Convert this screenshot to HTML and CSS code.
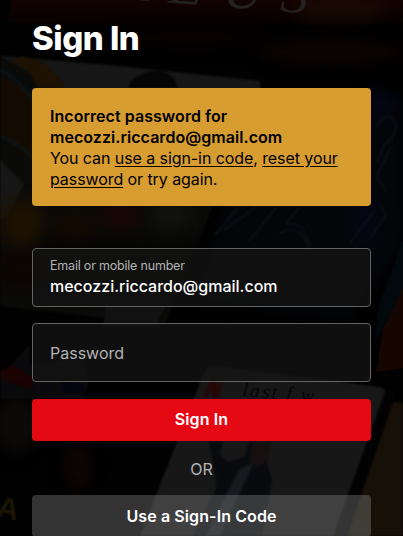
FILE: index.html
```html
<!DOCTYPE html>
<html lang="en">

<head>
    <meta charset="UTF-8">
    <meta name="viewport" content="width=device-width, initial-scale=1.0">
    <title>Sign In</title>
    <link rel="stylesheet" href="styles.css">
</head>

<body>
    <!-- poster wall -->
    <svg class="backdrop" viewBox="0 0 403 536" preserveAspectRatio="xMidYMin slice" aria-hidden="true">
        <defs>
            <linearGradient id="wood" x1="0" y1="0" x2="0" y2="1">
                <stop offset="0" stop-color="#130202"></stop>
                <stop offset="1" stop-color="#030101"></stop>
            </linearGradient>
            <filter id="soft" x="-30%" y="-30%" width="160%" height="160%" color-interpolation-filters="sRGB">
                <feGaussianBlur stdDeviation="7"></feGaussianBlur>
            </filter>
            <filter id="edge" color-interpolation-filters="sRGB">
                <feGaussianBlur stdDeviation="0.8"></feGaussianBlur>
            </filter>
        </defs>
        <rect width="403" height="536" fill="#010101"></rect>

        <!-- top poster -->
        <path d="M12 0H403V22L250 28L8 22Z" fill="url(#wood)"></path>
        <g filter="url(#soft)">
            <ellipse cx="340" cy="8" rx="46" ry="13" fill="#180a01"></ellipse>
            <ellipse cx="330" cy="52" rx="75" ry="13" fill="#0a0301"></ellipse>
            <ellipse cx="190" cy="38" rx="80" ry="10" fill="#080201"></ellipse>
        </g>
        <text class="poster-title" x="134 168 222 280" y="0" transform="rotate(4.5 136 0)">IEUS</text>

        <!-- left poster -->
        <g filter="url(#edge)">
            <path d="M0 55L258 80Q262 82 260 90L165 325L0 306Z" fill="#0a0a09"></path>
            <path d="M0 56L120 66L260 81V90H60Z" fill="#161616"></path>
            <path d="M129 88Q129 78 140 76Q147 70 160 71Q174 73 178 88Z" fill="#050505"></path>
            <path d="M0 76Q22 84 34 101V166Q16 145 0 138Z" fill="#130b02"></path>
            <path d="M22 56Q50 60 66 88H37Q32 68 10 62Z" fill="#1d1102"></path>
            <path d="M0 69Q19 80 34 100M0 136Q19 143 34 158" fill="none" stroke="#0a1417" stroke-width="3"></path>
            <path d="M0 160L24 184L8 216L0 220Z" fill="#171717"></path>
        </g>
        <g filter="url(#soft)">
            <ellipse cx="22" cy="223" rx="22" ry="24" fill="#1d1101"></ellipse>
            <ellipse cx="120" cy="216" rx="20" ry="14" fill="#180703"></ellipse>
            <ellipse cx="76" cy="226" rx="22" ry="15" fill="#130a01"></ellipse>
            <ellipse cx="170" cy="215" rx="20" ry="14" fill="#111110"></ellipse>
            <ellipse cx="22" cy="270" rx="25" ry="20" fill="#0c0501"></ellipse>
            <path d="M38 238L210 240L190 300L45 290Z" fill="#040403"></path>
        </g>
        <path d="M106 306H166L155 326H103Z" fill="#111111"></path>

        <!-- blue poster -->
        <g filter="url(#soft)">
            <path d="M225 200L403 90V245L350 320L195 300Z" fill="#040509"></path>
            <ellipse cx="366" cy="218" rx="14" ry="25" fill="#040614"></ellipse>
            <ellipse cx="378" cy="105" rx="12" ry="18" fill="#030514"></ellipse>
        </g>
        <g class="strands" filter="url(#edge)">
            <path d="M238 208L214 236M256 207L224 230M276 208L249 241M300 207L286 223L301 226L311 247"></path>
            <path d="M376 127Q388 108 395 122Q400 131 384 145L377 163M391 147L376 177L386 191"></path>
            <path d="M350 243L375 210M378 203L386 214L371 237M279 234Q299 220 311 252"></path>
        </g>
        <path d="M403 240L379 305L374 344L403 290Z" fill="#02090d"></path>
        <path d="M403 288L383 329L376 372L403 368Z" fill="#150601"></path>

        <!-- lower left poster -->
        <g filter="url(#edge)">
            <path d="M0 377L30 344V365L84 359L89 382L83 399H0Z" fill="#0a090b"></path>
            <path d="M0 371L14 365L33 378V389L12 384L0 378Z" fill="#1b0203"></path>
            <path d="M62 382L84 385V393H62Z" fill="#030410"></path>
        </g>
        <g filter="url(#soft)">
            <ellipse cx="17" cy="425" rx="22" ry="28" fill="#0c0a09"></ellipse>
            <ellipse cx="78" cy="466" rx="13" ry="27" fill="#0c0503"></ellipse>
        </g>
        <text class="poster-mark" x="-4" y="517" transform="rotate(12 0 514)">A</text>

        <!-- playing card -->
        <g filter="url(#edge)">
            <path d="M215 366Q208 364 203 375L140 536H336L386 396Q388 389 380 387Z" fill="#181718"></path>
            <path d="M209 441H223L220 454L228 462L244 457L250 441H270L267 463L272 480L262 536H193L217 487Z" fill="#080a0e"></path>
            <path d="M252 441H269L267 460L258 468L250 460Z" fill="#15100f"></path>
            <path d="M239 470L254 462L241 490L220 536H206L227 493Z" fill="#171a1e"></path>
            <path d="M203 397L211 377L216 379L219 387L224 376L219 398H213L210 391L207 398Z" fill="#250607"></path>
            <path d="M403 403L389 401L340 536H403Z" fill="#171006"></path>
            <path d="M386 389L397 391L347 536H333Z" fill="#020202"></path>
        </g>
        <text class="card-note" x="242" y="396" transform="rotate(5 242 396)">last f w</text>
    </svg>

    <main class="login">
        <h1 class="login-title">Sign In</h1>

        <div class="alert" role="alert">
            <strong>Incorrect password for <span>mecozzi.riccardo@gmail.com</span></strong>
            <p>You can <a href="#">use a sign-in code</a>, <a href="#">reset your password</a> or try again.</p>
        </div>

        <form class="login-form">
            <div class="field filled">
                <label for="email">Email or mobile number</label>
                <input type="text" id="email" value="mecozzi.riccardo@gmail.com">
            </div>
            <div class="field">
                <input type="password" id="password" placeholder="Password" aria-label="Password">
            </div>
            <button type="submit" class="btn btn-primary">Sign In</button>
            <p class="divider">OR</p>
            <button type="button" class="btn btn-secondary">Use a Sign-In Code</button>
        </form>
    </main>
</body>

</html>
```
FILE: styles.css
```css
* {
    box-sizing: border-box;
}

body {
    margin: 0;
    height: 100vh;
    overflow: hidden;
    background: #000;
    color: #fff;
    font-family: Inter, "Liberation Sans", sans-serif;
    font-size: 16px;
    line-height: 21px;
}

/* Backdrop */
.backdrop {
    position: absolute;
    top: 0;
    left: 0;
    width: 100%;
    height: 100%;
    z-index: -1;
}

.poster-title {
    font: italic 56px "Liberation Serif", serif;
    fill: #242020;
}

.poster-mark {
    font: bold 30px "Liberation Sans", sans-serif;
    fill: #191502;
}

.card-note {
    font: italic 20px "Liberation Serif", serif;
    letter-spacing: 2px;
    fill: #050505;
}

.strands {
    fill: none;
    stroke: #0d0f16;
    stroke-width: 2;
}

/* Login */
.login {
    padding: 17px 32px 0;
}

.login-title {
    margin: 0 0 29px;
    font-size: 33px;
    font-weight: 800;
    line-height: 42px;
    letter-spacing: -0.5px;
}

.alert {
    padding: 18px 17px 16px 18px;
    margin-bottom: 42px;
    border-radius: 4px;
    background: #d89d31;
    color: #000;
}

.alert strong {
    display: block;
    font-weight: 600;
    letter-spacing: 0.05px;
}

.alert strong span {
    display: block;
}

.alert p {
    margin: 0;
    letter-spacing: -0.08px;
}

.alert a {
    color: inherit;
    text-underline-offset: 2px;
}

/* Form */
.login-form {
    display: flex;
    flex-direction: column;
}

.field {
    display: flex;
    flex-direction: column;
    justify-content: center;
    height: 59px;
    margin-bottom: 16px;
    padding: 1px 16px 0 17px;
    border: 1px solid #646464;
    border-radius: 4px;
    background: rgba(22, 22, 22, 0.7);
}

.field.filled {
    padding-top: 0;
    padding-bottom: 1px;
}

.field label {
    margin-bottom: 2px;
    color: #b3b3b3;
    font-size: 12.5px;
    line-height: 17px;
    letter-spacing: -0.2px;
}

.field input {
    width: 100%;
    height: 21px;
    padding: 0;
    border: 0;
    outline: 0;
    background: none;
    color: #fff;
    font: inherit;
    font-weight: 500;
}

.field input::placeholder {
    color: #b3b3b3;
    font-weight: 400;
    opacity: 1;
}

.btn {
    height: 42px;
    padding: 0;
    border: 0;
    border-radius: 4px;
    color: #fff;
    font: inherit;
    font-weight: 600;
    letter-spacing: 0.1px;
    cursor: pointer;
}

.btn-primary {
    margin-top: 1px;
    padding-bottom: 1px;
    background: #e50914;
}

.btn-secondary {
    background: rgba(128, 128, 128, 0.4);
}

.divider {
    margin: 18px 0 15px;
    color: #b3b3b3;
    text-align: center;
}
```
